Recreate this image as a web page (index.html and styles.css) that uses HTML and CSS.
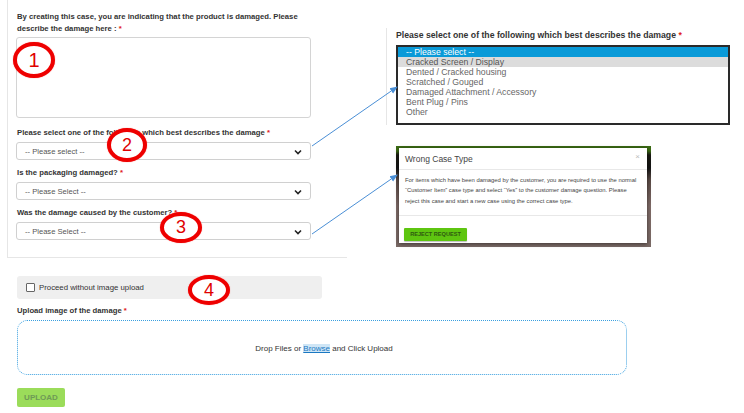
FILE: index.html
```html
<!DOCTYPE html>
<html>
<head>
<meta charset="utf-8">
<link rel="stylesheet" href="styles.css">
</head>
<body>
<div class="page">
  <div class="top">
    <div class="left-panel">
      <div class="group group-ta">
        <div class="label">By creating this case, you are indicating that the product is damaged. Please<br>describe the damage here : <span class="req">*</span></div>
        <div class="textarea"></div>
      </div>
      <div class="group">
        <div class="label">Please select one of the following which best describes the damage <span class="req">*</span></div>
        <div class="select"><span>-- Please select --</span><svg class="chev" width="8" height="6" viewBox="0 0 8 6"><polyline points="1,1.5 4,4.5 7,1.5" fill="none" stroke="#222" stroke-width="1.6"/></svg></div>
      </div>
      <div class="group">
        <div class="label">Is the packaging damaged? <span class="req">*</span></div>
        <div class="select"><span>-- Please Select --</span><svg class="chev" width="8" height="6" viewBox="0 0 8 6"><polyline points="1,1.5 4,4.5 7,1.5" fill="none" stroke="#222" stroke-width="1.6"/></svg></div>
      </div>
      <div class="group last">
        <div class="label">Was the damage caused by the customer? <span class="req">*</span></div>
        <div class="select"><span>-- Please Select --</span><svg class="chev" width="8" height="6" viewBox="0 0 8 6"><polyline points="1,1.5 4,4.5 7,1.5" fill="none" stroke="#222" stroke-width="1.6"/></svg></div>
      </div>
    </div>
    <div class="right">
      <div class="list-block">
        <div class="label big">Please select one of the following which best describes the damage <span class="req">*</span></div>
        <div class="listbox">
          <div class="opt sel">-- Please select --</div>
          <div class="opt hover">Cracked Screen / Display</div>
          <div class="opt">Dented / Cracked housing</div>
          <div class="opt">Scratched / Gouged</div>
          <div class="opt">Damaged Attachment / Accessory</div>
          <div class="opt">Bent Plug / Pins</div>
          <div class="opt">Other</div>
        </div>
      </div>
      <div class="backdrop">
        <div class="modal">
          <div class="modal-head"><span>Wrong Case Type</span><span class="close">×</span></div>
          <div class="modal-body">For items which have been damaged by the customer, you are required to use the normal<br>“Customer Item” case type and select “Yes” to the customer damage question. Please<br>reject this case and start a new case using the correct case type.</div>
          <div class="modal-foot"><div class="btn-reject">REJECT REQUEST</div></div>
        </div>
      </div>
    </div>
  </div>
  <div class="bottom">
    <div class="check-box"><span class="cb"></span><span>Proceed without image upload</span></div>
    <div class="label">Upload image of the damage <span class="req">*</span></div>
    <div class="dropzone"><span>Drop Files or <span class="browse">Browse</span> and Click Upload</span></div>
    <div class="btn-upload">UPLOAD</div>
  </div>

  <svg class="arrows" width="744" height="413" viewBox="0 0 744 413">
    <defs>
      <marker id="ah" markerWidth="8" markerHeight="8" refX="7" refY="4" orient="auto" markerUnits="userSpaceOnUse">
        <path d="M0,0.8 L8,4 L0,7.2 Z" fill="#4a8fd6"/>
      </marker>
    </defs>
    <line x1="312" y1="146" x2="397" y2="87" stroke="#4a8fd6" stroke-width="1" marker-end="url(#ah)"/>
    <line x1="312" y1="234" x2="397" y2="175" stroke="#4a8fd6" stroke-width="1" marker-end="url(#ah)"/>
  </svg>

  <div class="mark m1">1</div>
  <div class="mark m2">2</div>
  <div class="mark m3">3</div>
  <div class="mark m4">4</div>
</div>
</body>
</html>
```
FILE: styles.css
```css
html, body {
  margin: 0;
  padding: 0;
  background: #fff;
}
.page {
  position: relative;
  width: 744px;
  height: 413px;
  overflow: hidden;
  font-family: "Liberation Sans", Arial, sans-serif;
  color: #333;
}
.top {
  display: flex;
  align-items: flex-start;
}
.left-panel {
  margin-left: 7px;
  width: 340px;
  box-sizing: border-box;
  border-left: 1px solid #e6e6e6;
  border-bottom: 1px solid #e6e6e6;
  padding: 11px 0 17px 8px;
}
.label {
  font-size: 7.7px;
  line-height: 12px;
  font-weight: bold;
  color: #333;
  margin-bottom: 3px;
  padding-left: 1px;
  white-space: nowrap;
}
.req { color: #e02020; }
.group { margin-bottom: 7px; }
.group.last { margin-bottom: 0; }
.group-ta { margin-bottom: 9px; }
.group-ta .label { margin-bottom: 2px; }
.textarea {
  width: 295px;
  height: 81px;
  box-sizing: border-box;
  border: 1px solid #d4d4d4;
  border-radius: 3px;
  background: #fff;
}
.select {
  width: 295px;
  height: 18px;
  box-sizing: border-box;
  border: 1px solid #d0d0d0;
  border-radius: 3px;
  display: flex;
  align-items: center;
  justify-content: space-between;
  padding: 0 8px 0 8px;
  font-size: 7.6px;
  color: #555;
}
.chev { display: block; margin-top: 1px; }

.right {
  margin-left: 39px;
  padding-top: 28px;
  display: flex;
  flex-direction: column;
}
.list-block {
  border-left: 1px solid #e6e6e6;
  padding-left: 9px;
  padding-top: 1px;
}
.label.big {
  font-size: 8.7px;
  margin-bottom: 4px;
  padding-left: 0;
}
.listbox {
  width: 334px;
  height: 80px;
  box-sizing: border-box;
  border: 2px solid #2a2a2a;
  background: #fff;
}
.opt {
  height: 10px;
  line-height: 10px;
  font-size: 8.7px;
  color: #666;
  padding-left: 8px;
  white-space: nowrap;
}
.opt.sel { background: #0a9ad8; color: #fff; }
.opt.hover { background: #dcdcdc; color: #555; }

.backdrop {
  margin-top: 21px;
  margin-left: 10px;
  width: 255px;
  height: 101px;
  box-sizing: border-box;
  padding: 2px 4px 4px 3px;
  background: linear-gradient(180deg, #3b6a14 0px, #3b6a14 5px, #1a1a12 9px, #141414 22px, #5a4a45 34px, #7e6a66 60px, #7a6a66 101px);
}
.modal {
  background: #fff;
  height: 95px;
  box-shadow: 0 1px 4px rgba(0,0,0,0.5);
  display: flex;
  flex-direction: column;
}
.modal-head {
  height: 22px;
  box-sizing: border-box;
  border-bottom: 1px solid #e8e8e8;
  display: flex;
  align-items: center;
  justify-content: space-between;
  padding: 0 7px 0 6px;
  font-size: 8.5px;
  color: #444;
}
.close { color: #bbb; font-size: 8px; margin-top: -4px; }
.modal-body {
  height: 46px;
  box-sizing: border-box;
  border-bottom: 1px solid #e8e8e8;
  padding: 5px 0 0 6px;
  font-size: 5.85px;
  line-height: 10.4px;
  color: #444;
  white-space: nowrap;
}
.modal-foot {
  padding: 6px 0 0 5px;
}
.btn-reject {
  display: inline-block;
  width: 63px;
  height: 13px;
  line-height: 13px;
  text-align: center;
  background: #5ec510;
  color: #2f5a10;
  font-size: 5.6px;
  font-weight: bold;
  border-radius: 1px;
  box-shadow: 0 1px 1px rgba(0,0,0,0.25);
}

.bottom {
  padding-left: 17px;
  padding-top: 18px;
}
.check-box {
  width: 305px;
  height: 23px;
  box-sizing: border-box;
  background: #efefef;
  border-radius: 3px;
  display: flex;
  align-items: center;
  padding-left: 9px;
  font-size: 7.8px;
  color: #333;
  margin-bottom: 6px;
}
.cb {
  width: 7px;
  height: 7px;
  border: 1px solid #666;
  border-radius: 1px;
  background: #fff;
  margin-right: 4px;
}
.bottom .label { padding-left: 0; }
.dropzone {
  width: 610px;
  height: 55px;
  box-sizing: border-box;
  border: 1px dotted #3aa0e0;
  border-radius: 10px;
  display: flex;
  align-items: center;
  justify-content: center;
  font-size: 8px;
  color: #333;
  padding-top: 2px;
  padding-left: 4px;
}
.browse {
  color: #1a78c2;
  background: #cfe6f6;
  text-decoration: underline;
}
.btn-upload {
  margin-top: 13px;
  width: 48px;
  height: 19px;
  line-height: 19px;
  text-align: center;
  background: #9bdc5a;
  color: #6e9a56;
  font-size: 8px;
  font-weight: bold;
  border-radius: 2px;
}

.arrows {
  position: absolute;
  left: 0;
  top: 0;
  pointer-events: none;
}
.mark {
  position: absolute;
  box-sizing: border-box;
  border: 4px solid #ee0000;
  border-radius: 50%;
  background: #fff;
  color: #e00000;
  font-size: 18px;
  display: flex;
  align-items: center;
  justify-content: center;
  box-shadow: 0 0 1px #ff6060;
}
.m1 { left: 13px; top: 42px; width: 42px; height: 36px; font-size: 20px; }
.m2 { left: 107px; top: 128px; width: 40px; height: 34px; }
.m3 { left: 160px; top: 212px; width: 42px; height: 31px; }
.m4 { left: 188px; top: 275px; width: 42px; height: 30px; }
```
